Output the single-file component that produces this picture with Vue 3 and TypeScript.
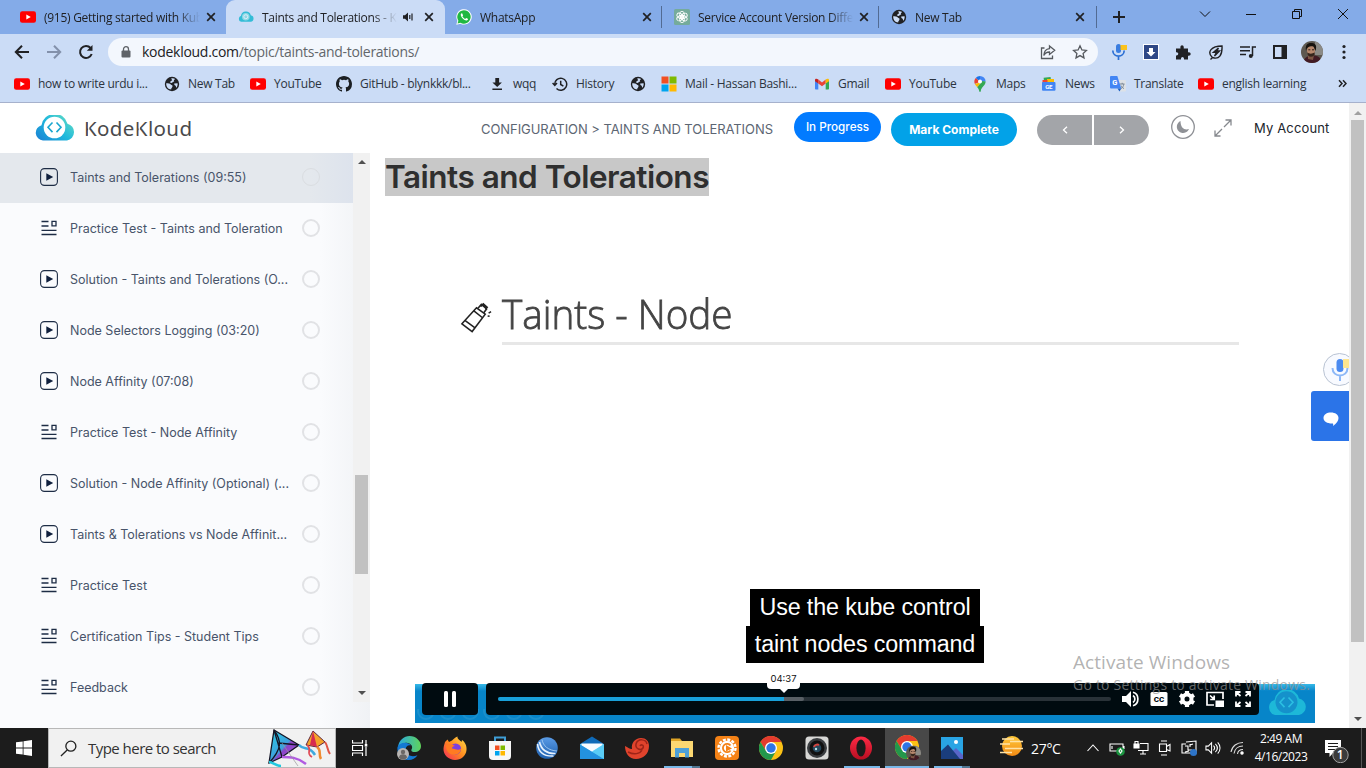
<script setup lang="ts">
interface Tab { icon: string; title: string; audio?: boolean; active?: boolean }
interface Bookmark { icon: string; label: string }
interface Lesson { kind: 'play' | 'doc'; title: string; current?: boolean }
interface App { icon: string; state?: 'open' | 'stack' | 'focus' }

const tabs: Tab[] = [
  { icon: 'yt', title: '(915) Getting started with Kubernetes' },
  { icon: 'cloud', title: 'Taints and Tolerations - KodeKloud', audio: true, active: true },
  { icon: 'whatsapp', title: 'WhatsApp' },
  { icon: 'gpt', title: 'Service Account Version Difference' },
  { icon: 'globe', title: 'New Tab' },
]

const bookmarks: Bookmark[] = [
  { icon: 'yt', label: 'how to write urdu i...' },
  { icon: 'globe', label: 'New Tab' },
  { icon: 'yt', label: 'YouTube' },
  { icon: 'github', label: 'GitHub - blynkkk/bl...' },
  { icon: 'download', label: 'wqq' },
  { icon: 'history', label: 'History' },
  { icon: 'globe', label: '' },
  { icon: 'ms', label: 'Mail - Hassan Bashi...' },
  { icon: 'gmail', label: 'Gmail' },
  { icon: 'yt', label: 'YouTube' },
  { icon: 'maps', label: 'Maps' },
  { icon: 'news', label: 'News' },
  { icon: 'translate', label: 'Translate' },
  { icon: 'yt', label: 'english learning' },
]

const lessons: Lesson[] = [
  { kind: 'play', title: 'Taints and Tolerations (09:55)', current: true },
  { kind: 'doc', title: 'Practice Test - Taints and Toleration' },
  { kind: 'play', title: 'Solution - Taints and Tolerations (O...' },
  { kind: 'play', title: 'Node Selectors Logging (03:20)' },
  { kind: 'play', title: 'Node Affinity (07:08)' },
  { kind: 'doc', title: 'Practice Test - Node Affinity' },
  { kind: 'play', title: 'Solution - Node Affinity (Optional) (...' },
  { kind: 'play', title: 'Taints & Tolerations vs Node Affinit...' },
  { kind: 'doc', title: 'Practice Test' },
  { kind: 'doc', title: 'Certification Tips - Student Tips' },
  { kind: 'doc', title: 'Feedback' },
]

const apps: App[] = [
  { icon: 'edge' }, { icon: 'firefox' }, { icon: 'store' }, { icon: 'bluedisc' }, { icon: 'mail' },
  { icon: 'shell' }, { icon: 'explorer', state: 'stack' }, { icon: 'orange' }, { icon: 'chrome' },
  { icon: 'camera' }, { icon: 'opera', state: 'open' }, { icon: 'chromeuser', state: 'focus' },
  { icon: 'photos', state: 'stack' },
]
</script>

<template>
  <div class="screen">
    <svg class="sprite" aria-hidden="true">
      <defs>
        <linearGradient id="gCloud" x1="0" y1="1" x2="1" y2="0.2"><stop offset="0" stop-color="#1a7fd4" /><stop offset=".55" stop-color="#1fb9dc" /><stop offset="1" stop-color="#63dcc4" /></linearGradient>
        <linearGradient id="gEdge" x1="0" y1="0" x2="1" y2="0"><stop offset="0" stop-color="#2aa9e0" /><stop offset="1" stop-color="#5fd35a" /></linearGradient>
        <linearGradient id="gFox" x1="1" y1="0" x2="0" y2="1"><stop offset="0" stop-color="#ffe04a" /><stop offset=".5" stop-color="#ff8a1f" /><stop offset="1" stop-color="#f4265c" /></linearGradient>
        <linearGradient id="gDisc" x1="0" y1="0" x2="0" y2="1"><stop offset="0" stop-color="#5a9be6" /><stop offset="1" stop-color="#1d5fae" /></linearGradient>
        <linearGradient id="gOpera" x1="0" y1="0" x2="0" y2="1"><stop offset="0" stop-color="#ff2a45" /><stop offset="1" stop-color="#b80f22" /></linearGradient>
        <linearGradient id="gSun" x1="0" y1="0" x2="0" y2="1"><stop offset="0" stop-color="#ffc93a" /><stop offset="1" stop-color="#f28a14" /></linearGradient>
        <linearGradient id="gKite" x1="0" y1="0" x2="1" y2="1"><stop offset="0" stop-color="#27d3e6" /><stop offset=".5" stop-color="#3f9fdc" /><stop offset=".55" stop-color="#8c45c9" /><stop offset="1" stop-color="#a455d8" /></linearGradient>
      </defs>
      <symbol id="yt" viewBox="0 0 16 16"><rect y="2.200" width="16" height="11.600" rx="2.200" fill="#f00" /><path d="M6.300 5.500v5L10.800 8z" fill="#fff" /></symbol>
      <symbol id="cloud" viewBox="0 0 40 26"><path d="M8 25.500A7.800 7.800 0 0 1 6.500 10.200a13.300 13.300 0 0 1 26-1.500A8.600 8.600 0 0 1 32 25.500z" fill="url(#gCloud)" /><circle cx="19.500" cy="12.500" r="10.800" fill="#fff" /><path d="M17.500 7.500 13 12.300l4.500 4.800M21.500 7.500l4.500 4.800-4.500 4.800" fill="none" stroke="#1aa6cf" stroke-width="1.600" /></symbol>
      <symbol id="cloudtab" viewBox="0 0 40 26"><path d="M8 25A7.800 7.800 0 0 1 7.500 10a12.500 12.500 0 0 1 24.500-1.500A8.400 8.400 0 0 1 32 25z" fill="#33bcd6" /><circle cx="19.500" cy="12.300" r="9.500" fill="#8fd9e4" /><circle cx="19.500" cy="12.300" r="5" fill="none" stroke="#eef" stroke-width="2" /></symbol>
      <symbol id="whatsapp" viewBox="0 0 16 16"><path d="M.3 15.700 1.400 11.800A7.700 7.700 0 1 1 4.400 14.700z" fill="#fff" /><path d="M1.500 14.500 2.400 11.700A6.700 6.700 0 1 1 4.500 13.700z" fill="#1fb841" /><path d="M5.600 4.300c-1.400.8-1 2.700.4 4.400s3.400 3 4.900 2.700c1-.3 1.200-1.100 1-1.600L10.100 9l-.9 1C8 9.500 6.900 8.500 6.400 7.300l.7-.9-.8-1.900z" fill="#fff" /></symbol>
      <symbol id="gpt" viewBox="0 0 16 16"><rect width="16" height="16" rx="1.500" fill="#75ab9b" /><g fill="none" stroke="#fff" stroke-width=".9"><ellipse cx="8" cy="5.700" rx="2.400" ry="3.400" /><ellipse cx="8" cy="5.700" rx="2.400" ry="3.400" transform="rotate(60 8 8)" /><ellipse cx="8" cy="5.700" rx="2.400" ry="3.400" transform="rotate(120 8 8)" /><ellipse cx="8" cy="5.700" rx="2.400" ry="3.400" transform="rotate(180 8 8)" /><ellipse cx="8" cy="5.700" rx="2.400" ry="3.400" transform="rotate(240 8 8)" /><ellipse cx="8" cy="5.700" rx="2.400" ry="3.400" transform="rotate(300 8 8)" /></g></symbol>
      <symbol id="globe" viewBox="0 0 16 16"><circle cx="8" cy="8" r="7.200" fill="#202124" /><path d="M2.200 7.300c2.100.2 3.700.1 4.600 1.200.8 1.100 1.900.4 1.700 1.900-.2 1.400-1.500 1.300-1.300 3.200C4.200 13.400 2 10.800 2.200 7.300zM7.200 2.300c1.600-.4 3 0 3.900.6L9.800 4.300l.4 1.300-1.600.3-.4 1.200-2-.3c.1-1.700.4-2 2-2.400zM10.200 7.500l3.400-.3c.3 1.800-.4 3.600-1.400 4.600-.5-1.100.1-1.700-.9-2.300-.8-.4-1.200-1.100-1.100-2z" fill="#cbdcf6" /></symbol>
      <symbol id="github" viewBox="0 0 16 16"><path fill="#1b1f23" d="M8 0C3.580 0 0 3.580 0 8c0 3.540 2.290 6.530 5.470 7.590.4.070.55-.17.55-.38 0-.19-.010-.82-.010-1.490-2.010.37-2.530-.49-2.690-.94-.09-.23-.48-.94-.82-1.130-.28-.15-.68-.52-.010-.53.63-.010 1.080.58 1.230.82.72 1.210 1.870.87 2.330.66.070-.52.28-.87.51-1.070-1.780-.2-3.640-.89-3.640-3.950 0-.87.31-1.590.82-2.150-.08-.2-.36-1.020.08-2.120 0 0 .67-.21 2.200.82a7.500 7.500 0 0 1 4 0c1.530-1.040 2.200-.82 2.200-.82.44 1.100.16 1.920.08 2.120.51.56.82 1.270.82 2.150 0 3.070-1.870 3.750-3.650 3.950.29.25.54.73.54 1.480 0 1.070-.010 1.930-.010 2.200 0 .21.15.46.55.38A8.010 8.010 0 0 0 16 8c0-4.420-3.580-8-8-8z" /></symbol>
      <symbol id="download" viewBox="0 0 16 16"><path d="M6.300 2h3.800v4.500h2.800L8.200 11 3.400 6.500h2.900zM3.400 12.400h9.600v1.600H3.400z" fill="#202124" /></symbol>
      <symbol id="history" viewBox="0 0 16 16"><path d="M2.700 8.500a6 6 0 1 1 1.800 4M.6 7l2.200 2.400L5 7M8.700 4.700v3.800l2.700 1.700" fill="none" stroke="#202124" stroke-width="1.500" /></symbol>
      <symbol id="ms" viewBox="0 0 16 16"><path d="M.5.500h7v7h-7z" fill="#f25022" /><path d="M8.500.500h7v7h-7z" fill="#7fba00" /><path d="M.5 8.500h7v7h-7z" fill="#00a4ef" /><path d="M8.500 8.500h7v7h-7z" fill="#ffb900" /></symbol>
      <symbol id="gmail" viewBox="0 0 16 16"><path d="M1 4.500 4.300 7v6.500H1.800a.8.800 0 0 1-.8-.8z" fill="#4285f4" /><path d="M15 4.500 11.700 7v6.500h2.500a.8.800 0 0 0 .8-.8z" fill="#34a853" /><path d="M4.300 3.600 8 6.400l3.700-2.800V7.500L8 10.300 4.300 7.500z" fill="#ea4335" /><path d="M1 4.300C1 2.500 2.800 2.400 4.300 3.600v3.800L1 5.200z" fill="#c5221f" /><path d="M15 4.300c0-1.800-1.800-1.900-3.300-.7v3.800L15 5.200z" fill="#fbbc04" /></symbol>
      <symbol id="maps" viewBox="0 0 16 16"><path d="M8 0a5.600 5.600 0 0 0-4.300 2L8 5.700z" fill="#1a73e8" /><path d="M8 0a5.600 5.600 0 0 1 5.600 5.500H8z" fill="#4285f4" /><path d="M3.700 2a5.600 5.600 0 0 0-.8 6L8 5.700z" fill="#ea4335" /><path d="M2.900 8c.4 1 1.400 2 2.300 3.200L10 5.700z" fill="#fbbc04" /><path d="M13.600 5.500c0 4.300-4.500 5.500-4.800 9.500-.2 1.300-1.400 1.300-1.600 0-.2-1.700-1-2.600-2-3.800L10.500 5z" fill="#34a853" /><circle cx="8" cy="5.600" r="2" fill="#fff" /></symbol>
      <symbol id="news" viewBox="0 0 16 16"><path d="M3 1.200h7v5H3z" fill="#34a853" transform="rotate(-6 8 5)" /><path d="M6 3h7v5H6z" fill="#fbbc04" /><path d="M1.500 4h5v4h-5z" fill="#ea4335" /><rect x="1" y="6" width="13.500" height="8.800" rx="1" fill="#4285f4" /><text x="7.700" y="12.800" text-anchor="middle" font-family="Roboto,sans-serif" font-size="6" font-weight="700" fill="#fff">GE</text></symbol>
      <symbol id="translate" viewBox="0 0 16 16"><path d="M7 4h8a1 1 0 0 1 1 1v9.500a1 1 0 0 1-1 1H9.500z" fill="#dde1e6" /><path d="M10 8h4.500M12.200 6.800V8M11 12.500c1.800-1 2.500-2.500 2.800-4.400M11 9.500c.5 1.400 1.700 2.500 3 3" fill="none" stroke="#7b8794" /><path d="M1 0h6.300l4 12.500H1a1 1 0 0 1-1-1V1a1 1 0 0 1 1-1z" fill="#4285f4" /><path d="m7.500 12.500 3.800 0-1.800 3z" fill="#1b5fc4" /><text x="4.600" y="9" text-anchor="middle" font-family="Roboto,sans-serif" font-size="7.500" font-weight="700" fill="#fff">G</text></symbol>
      <symbol id="avatar" viewBox="0 0 22 22"><clipPath id="cAv"><circle cx="11" cy="11" r="11" /></clipPath><g clip-path="url(#cAv)"><path d="M0 0h22v22H0z" fill="#5d5850" /><path d="M14 0h8v14h-8z" fill="#8b8a86" /><path d="M2 22c1-5 4-7 8-7.500C15 14 20 15 21 22z" fill="#421b24" /><path d="M7 14h6l-1 5-5-1z" fill="#7d5543" /><ellipse cx="10" cy="9.500" rx="4" ry="5.800" fill="#b5876c" /><path d="M5 10C4 3 7 1.500 11 2s5 3 3.500 8C13 7 13 5 11 5.300 8 5.500 6 6 5 10z" fill="#17130f" /><path d="M6.200 11.500c2 1.500 5 1.500 7.500 0-.3 3.300-1.500 4.300-3.700 4.300s-3.500-1.500-3.800-4.300z" fill="#35251c" /><path d="M7.300 8.800h2M11 8.800h2" stroke="#2c1b14" /></g></symbol>
      <symbol id="edge" viewBox="0 0 24 24"><path d="M1 11C2 4 7 0 12.500 0 19 0 24 5 24 10c0 4-3 6-6.500 6-3 0-3.800-1.500-2.700-3C16.500 9.500 12 6 8 7c-3 .5-5 2-7 4z" fill="url(#gEdge)" /><path d="M.5 11C3 6 11 5.500 14 9.500c-4-1-6 2-5 6 1 4 6 6 11.500 3.700C17 25 8 25.500 4 21 1 18 0 15 .5 11z" fill="#1379d3" /><circle cx="6" cy="18" r="6" fill="#b8b5b3" /><circle cx="6" cy="16" r="2.200" fill="#6b6866" /><path d="M2 21.500c0-4.500 8-4.500 8 0-2 3-6 3-8 0z" fill="#6b6866" /></symbol>
      <symbol id="firefox" viewBox="0 0 24 24"><path d="M2 6 4.500 3.500 6 6l3-1.500C11 3 12 1 14.500.5 14 3 17 4 18.500 6L19 4c3 2 5 6 4.500 10C23 20 18 24 12 24S0 19 .5 12.500C.7 10 1.500 8 2 6z" fill="url(#gFox)" /><circle cx="12.500" cy="13" r="5.600" fill="#7b3fe0" /><path d="M3 9c3-2 6-1 9 1-2 0-3 1-3 2.500 4 0 5 3 9 0 0 4-4 7-8 6C5 18 3 14 3 9z" fill="#ff7b22" /></symbol>
      <symbol id="store" viewBox="0 0 24 24"><path d="M7 6V1.500h10V6" fill="none" stroke="#3f9ed6" stroke-width="2" /><path d="M1 5h22v15a4 4 0 0 1-4 4H5a4 4 0 0 1-4-4z" fill="#f7f7f7" /><path d="M7 9.500h4.500V14H7z" fill="#f25022" /><path d="M12.500 9.500H17V14h-4.500z" fill="#7fba00" /><path d="M7 15h4.500v4.500H7z" fill="#00a4ef" /><path d="M12.500 15H17v4.500h-4.500z" fill="#ffb900" /></symbol>
      <symbol id="bluedisc" viewBox="0 0 24 24"><circle cx="12" cy="12" r="10.800" fill="url(#gDisc)" /><path d="M2.500 8c1 8 6.500 12.500 16 12M4.500 6C6 13.500 12 18 20.500 17.500" fill="none" stroke="#e8f2fd" stroke-width="1.600" /><path d="M7 3.500C8 10 13.500 14.500 22 15" fill="none" stroke="#9cc5ef" stroke-width="1" /></symbol>
      <symbol id="mail" viewBox="0 0 24 24"><path d="M0 8 12 .5 24 8z" fill="#0f6ab8" /><path d="M0 8h24v15H0z" fill="#50c3ef" /><path d="M1.500 7.500h21v2L12 16 1.500 9.500z" fill="#f7fbff" /><path d="M0 8.500 24 23H0z" fill="#2392df" /><path d="M12 15.500 24 8v15z" fill="#5accf5" /></symbol>
      <symbol id="shell" viewBox="0 0 24 24"><path d="M0 10c3 1 4 3 7 3-1-6 3-11 9-11 5 0 8 3 8 8 0 8-6 13-13 13C4 23 0 17 0 10z" fill="#e0432c" /><path d="M22 8c-1-5-9-6-11 0-1 5 5 7 7 4 1.500-3-2-4-3-2M3 16c6 3 12 2 14-2" fill="none" stroke="#9d2418" stroke-width="1.500" /></symbol>
      <symbol id="explorer" viewBox="0 0 24 24"><path d="M1 2.500h9l2 2.500h-11z" fill="#e0a526" /><path d="M1 5h22v16H1z" fill="#fcd872" /><path d="M5 12h14v9.500h-4V17H9v4.500H5z" fill="#4da0d8" /></symbol>
      <symbol id="orange" viewBox="0 0 24 24"><rect width="24" height="24" rx="4" fill="#f58216" /><circle cx="12" cy="12" r="8.500" fill="none" stroke="#fff" stroke-width="2.400" stroke-dasharray="3 1.450" /><circle cx="12" cy="12" r="7.200" fill="#fff" /><path d="M15.500 9.500a4.200 4.200 0 1 0 0 5" fill="none" stroke="#f58216" stroke-width="1.800" /><path d="m11 9 6 3.500-6 3z" fill="#f58216" /></symbol>
      <symbol id="chrome" viewBox="0 0 24 24"><circle cx="12" cy="12" r="12" fill="#fbc116" /><path d="M12 6h10.400A12 12 0 0 0 1.600 6L7 15z" fill="#e33b2e" /><path d="M1.600 6A12 12 0 0 0 12 24l5-9H7z" fill="#23974b" /><circle cx="12" cy="12" r="6" fill="#fff" /><circle cx="12" cy="12" r="4.700" fill="#2f75e6" /></symbol>
      <symbol id="camera" viewBox="0 0 24 24"><rect x=".5" y=".5" width="23" height="23" rx="3.500" fill="#d8d8d6" /><circle cx="12" cy="12" r="10" fill="#3a3d40" /><circle cx="12" cy="12" r="7.500" fill="#111" /><circle cx="12" cy="12" r="4.300" fill="#26485c" /><path d="M9 11a3.500 3.500 0 0 1 5-2" fill="none" stroke="#d3443e" stroke-width="2" /><circle cx="11" cy="13" r="1.200" fill="#b8e3ea" /></symbol>
      <symbol id="opera" viewBox="0 0 24 24"><ellipse cx="12" cy="12" rx="11" ry="11.500" fill="url(#gOpera)" /><ellipse cx="12" cy="12" rx="4.600" ry="8.600" fill="#1c1c1c" /></symbol>
      <symbol id="chromeuser" viewBox="0 0 26 26"><use href="#chrome" width="24" height="24" /><use href="#avatar" x="11" y="10.500" width="15" height="15" /></symbol>
      <symbol id="photos" viewBox="0 0 24 24"><path d="M1 1h22v22H1z" fill="#29a4e4" /><path d="M12 15.500 16 12l7 7v4H12z" fill="#5965c9" /><path d="M1 15 8 8.500 20 23H1z" fill="#1a3d7c" /><circle cx="16" cy="6" r="2" fill="#fff" /></symbol>
    </svg>

    <header class="tabstrip">
      <div v-for="(t, n) in tabs" :key="n" class="tab" :class="{ active: t.active }">
        <svg class="ico"><use :href="t.icon === 'cloud' ? '#cloudtab' : '#' + t.icon" /></svg>
        <span class="tabtitle">{{ t.title }}</span>
        <svg v-if="t.audio" class="audio" viewBox="0 0 12 12"><path d="M1 4.300h2L6 1.500v9L3 7.700H1z" fill="#202124" /><path d="M7.800 4v4M10 2.500v7" stroke="#202124" stroke-width="1.200" /></svg>
        <svg class="close" viewBox="0 0 10 10"><path d="m1.200 1.200 7.600 7.600m0-7.600L1.200 8.800" stroke="#202124" stroke-width="1.700" /></svg>
      </div>
      <svg class="plus" viewBox="0 0 12 12"><path d="M6 0v12M0 6h12" stroke="#202124" stroke-width="2" /></svg>
      <div class="winctl">
        <svg viewBox="0 0 12 12"><path d="m1 3.500 5 5 5-5" /></svg>
        <svg viewBox="0 0 12 12"><path d="M1 6.500h10" /></svg>
        <svg viewBox="0 0 12 12"><path d="M1.500 3.500h7v7h-7zM3.500 3.500v-2h7v7h-2" /></svg>
        <svg viewBox="0 0 12 12"><path d="m1 1 10 10M11 1 1 11" /></svg>
      </div>
    </header>

    <div class="toolbar">
      <svg class="nav" viewBox="0 0 16 16"><path d="M15 8H2M8 1.800 1.800 8 8 14.200" /></svg>
      <svg class="nav dim" viewBox="0 0 16 16"><path d="M1 8h13M8 1.800 14.200 8 8 14.200" /></svg>
      <svg class="nav" viewBox="0 0 16 16"><path d="M13.700 10A6 6 0 1 1 12.600 4" /><path d="M14.500 1v5.700H8.800z" fill="#202124" stroke="none" /></svg>
      <div class="omnibox">
        <svg class="lock" viewBox="0 0 10 12"><rect x=".5" y="4.500" width="9" height="7" rx="1" fill="#5f6368" /><path d="M2.500 5V3.200a2.500 2.500 0 0 1 5 0V5" fill="none" stroke="#5f6368" stroke-width="1.300" /></svg>
        <span class="url">kodekloud.com<i>/topic/taints-and-tolerations/</i></span>
        <svg class="share" viewBox="0 0 16 16"><path d="M4.500 4H1.500v10.500h11v-3M9.500 2l5.200 4.300-5.200 4.200V8C7 8 5 9 3.800 11.500 4 7.500 6 5 9.500 4.600z" /></svg>
        <svg class="share" viewBox="0 0 16 16"><path d="m8 1.800 1.900 4.100 4.500.5-3.300 3 .9 4.500L8 11.600l-4 2.300.9-4.500-3.300-3 4.500-.5z" /></svg>
      </div>
      <div class="ext">
        <svg viewBox="0 0 16 16"><rect x="5" y="0" width="5" height="9" rx="2.500" fill="#3a7de0" /><path d="M1.800 6.500c0 7.500 11.400 7.500 11.400 0M7.500 12v4" fill="none" stroke="#2b6fd4" stroke-width="1.700" /><path d="M9.500 1H16v5H9.500z" fill="#fbc21b" /></svg>
        <svg viewBox="0 0 16 16"><path d="M0 0h16v16H0z" fill="#fff" /><path d="M1 1h14v14H1z" fill="#2f4886" /><path d="M6 4h4v4h2.500L8 12.500 3.500 8H6z" fill="#fff" /></svg>
        <svg viewBox="0 0 16 16"><path d="M1 4.500h4.500c-1-4.500 4-4.500 3.200 0H13v4c3.500-1 3.500 4 0 3.200V15.500H9c.5-3.500-3.500-3.500-3 0H1v-4c3 .5 3-3.800 0-3.200z" fill="#202124" /></svg>
        <svg viewBox="0 0 16 16"><path d="M4 13C-1 8 3 2 14 2c.5 9-3 14-9.500 11.500L2.500 15.500M10.500 4 5.500 8.300h3L6.500 12l5-5h-3z" fill="none" stroke="#202124" stroke-width="1.400" /></svg>
        <svg viewBox="0 0 16 16"><path d="M0 3h10M0 6.700h10M0 10.500h6M12.500 12V3H16" fill="none" stroke="#202124" stroke-width="1.500" /><circle cx="10.800" cy="12" r="2" fill="#202124" /></svg>
        <svg viewBox="0 0 16 16"><path d="M2 2h12v12H2z" fill="none" stroke="#202124" stroke-width="2" /><path d="M9.500 2H14v12H9.500z" fill="#202124" /></svg>
        <svg class="face"><use href="#avatar" /></svg>
        <svg viewBox="0 0 16 16"><g fill="#202124"><circle cx="8" cy="2.500" r="1.600" /><circle cx="8" cy="8" r="1.600" /><circle cx="8" cy="13.500" r="1.600" /></g></svg>
      </div>
    </div>

    <nav class="bookmarks">
      <div v-for="(b, n) in bookmarks" :key="n" class="bm"><svg class="ico"><use :href="'#' + b.icon" /></svg><span>{{ b.label }}</span></div>
      <svg class="more" viewBox="0 0 9 9"><path d="m1 1.300 3 3.200L1 7.700M5 1.300l3 3.200-3 3.200" fill="none" stroke="#202124" stroke-width="1.500" /></svg>
    </nav>

    <main class="page">
      <div class="site">
        <header class="sitehead">
          <svg class="logo"><use href="#cloud" /></svg>
          <svg class="word" viewBox="0 0 108 20"><text x="-1" y="16.800" textLength="108" lengthAdjust="spacing">KodeKloud</text><path d="M3.700 1v17M54.300 1v17" stroke="#fff" stroke-width="1.200" /></svg>
          <span class="crumb">CONFIGURATION &gt; TAINTS AND TOLERATIONS</span>
          <span class="progress">In Progress</span>
          <button class="complete">Mark Complete</button>
          <div class="pager"><span><svg viewBox="0 0 6 8"><path d="M5 .7 1.500 4 5 7.300" /></svg></span><span><svg viewBox="0 0 6 8"><path d="M1 .7 4.500 4 1 7.300" /></svg></span></div>
          <svg class="moon" viewBox="0 0 24 24"><circle cx="12" cy="12" r="11.300" fill="none" stroke="#8f9196" stroke-width="1.300" /><path d="M9.500 6a6.300 6.300 0 1 0 8.500 8c-4 1.500-8.500-.5-8.500-8z" fill="#8f9196" /></svg>
          <svg class="expand" viewBox="0 0 18 18"><path d="M11.500 1H17v5.500M17 1l-7 7M6.500 17H1v-5.500M1 17l7-7" /></svg>
          <span class="account">My Account</span>
        </header>
        <div class="cols">
          <aside class="side">
            <ul class="lessons">
              <li v-for="l in lessons" :key="l.title" :class="{ current: l.current }">
                <svg v-if="l.kind === 'play'" class="kind" viewBox="0 0 18 18"><rect x=".6" y=".6" width="16.800" height="16.800" rx="3.800" fill="none" stroke="#1d2c45" stroke-width="1.100" /><path d="m6.300 5.200 6.900 3.800-6.900 3.800z" fill="#0f1f3d" /></svg>
                <svg v-else class="kind" viewBox="0 0 18 18"><path d="M1.500 2.500h7M1.500 7h7M1.500 11.300h15M1.500 15.500h15M12 2.300h4v4.500h-4z" fill="none" stroke="#1d2c45" stroke-width="1.300" /></svg>
                <span>{{ l.title }}</span><b></b>
              </li>
            </ul>
            <div class="bar sidebar"><svg viewBox="0 0 8 5"><path d="m0 5 4-4 4 4z" /></svg><div></div><svg viewBox="0 0 8 5"><path d="m0 0 4 4 4-4z" /></svg></div>
          </aside>
          <section class="content">
            <h1><span>Taints and Tolerations</span></h1>
            <div class="video">
              <div class="slide">
                <svg class="spray" viewBox="0 0 34 32"><g fill="none" stroke="#222" stroke-width="1.600"><path d="M2 22 17 5.500l9 6.500L12.500 30zM5 18.500l10.500 7.800M14 8.500l9.500 7.500" /><path d="M18.500 6 22 2l5.500 4.500-3 4M21.500 4 24 1.500 28 5l-2 2" /><path d="m29.500 11 2.500-1.500M28.500 14l2 .3" /></g></svg>
                <h2><span>Taints - Node</span></h2>
              </div>
              <div class="caption"><span>Use the kube control</span><span>taint nodes command</span></div>
              <div class="band">
                <svg class="rings" viewBox="0 0 130 14"><g fill="none" stroke="#3aa0d2" stroke-width="2" opacity=".4"><circle v-for="c in 6" :key="c" :cx="c * 22 - 11" cy="2" r="8" /></g></svg>
                <div class="pause"><svg viewBox="0 0 12 16"><rect width="4" height="16" rx="1.500" fill="#fff" /><rect x="8" width="4" height="16" rx="1.500" fill="#fff" /></svg></div>
                <div class="controls">
                  <div class="track"><i class="played"></i><i class="buffered"></i><span class="time">04:37</span></div>
                  <svg viewBox="0 0 18 16"><path d="M0 5h4l5-5v16l-5-5H0z" fill="#fff" /><path d="M11 4.500c2.500 1.500 2.500 5.500 0 7M11 1.300c6.500 1.700 6.500 11.700 0 13.400" fill="none" stroke="#fff" stroke-width="1.700" /></svg>
                  <svg viewBox="0 0 18 16"><rect x=".5" y="1" width="17" height="14" rx="1.500" fill="#fff" /><text x="9" y="11" text-anchor="middle" font-family="Roboto,sans-serif" font-weight="900" font-size="8" fill="#000b10">CC</text></svg>
                  <svg viewBox="0 0 18 16"><circle cx="9" cy="8" r="4.500" fill="none" stroke="#fff" stroke-width="4" /><path d="M9 0v3M9 13v3M2 4l2.700 1.500M13.300 10.500 16 12M2 12l2.700-1.500M13.300 5.500 16 4" stroke="#fff" stroke-width="4.200" /></svg>
                  <svg viewBox="0 0 18 16"><path d="M8 14H1V1.500h16V8M4 4.500l4 3.700M8.200 4.500v4h-4" fill="none" stroke="#fff" stroke-width="1.700" /><path d="M9.500 9.500H18V16H9.500z" fill="#fff" /></svg>
                  <svg viewBox="0 0 18 16"><path d="M2 5.500V1h4.500M2 1l4.500 4M11.500 1H16v4.500M16 1l-4.500 4M2 10.500V15h4.500M2 15l4.500-4M16 10.500V15h-4.500M16 15l-4.500-4" fill="none" stroke="#fff" stroke-width="1.800" /></svg>
                </div>
                <svg class="watermark" viewBox="0 0 40 26"><path d="M8 25A7.800 7.800 0 0 1 7.500 10a12.500 12.500 0 0 1 24.500-1.500A8.400 8.400 0 0 1 32 25z" fill="#1db8d8" /><circle cx="19.500" cy="12.300" r="11" fill="#1591cb" /><path d="M17.500 7.500 13 12.300l4.500 4.800M21.500 7.500l4.500 4.800-4.500 4.800" fill="none" stroke="#2bbfe2" stroke-width="1.600" /></svg>
              </div>
            </div>
          </section>
        </div>
        <div class="voice"><svg viewBox="0 0 18 24"><rect x="5.500" y="1" width="7" height="13" rx="3.500" fill="#4a8af0" /><path d="M1.500 10c0 10 15 10 15 0M9 17.500V23" fill="none" stroke="#8db8f7" stroke-width="2" /><path d="M12 1h6v9h-6z" fill="#fde58f" /></svg></div>
        <div class="chat"><svg viewBox="0 0 16 16"><path d="M8 1.500c4.200 0 7.500 2.200 7.500 5.500 0 2.500-1.700 5.500-5.500 8 .3-1 .3-1.700 0-2.500C4.500 12.800.5 10.500.5 7S3.800 1.500 8 1.500z" fill="#fff" /></svg></div>
      </div>
      <div class="bar pagebar"><svg viewBox="0 0 8 5"><path d="m0 5 4-4 4 4z" fill="#a0a0a0" /></svg><div></div><svg viewBox="0 0 8 5"><path d="m0 0 4 4 4-4z" /></svg></div>
    </main>

    <div class="activate"><p>Activate Windows</p><small>Go to Settings to activate Windows.</small></div>

    <footer class="taskbar">
      <div class="start"><svg viewBox="0 0 16 16"><path d="M0 2.300 6.700 1.400v6.200H0zM7.500 1.200 16 0v7.600H7.500zM0 8.400h6.700v6.200L0 13.700zM7.500 8.400H16V16l-8.500-1.200z" fill="#fff" /></svg></div>
      <div class="search">
        <svg class="lens" viewBox="0 0 18 18"><circle cx="11.500" cy="6.500" r="5.300" /><path d="M7.600 10.500 1 17" /></svg>
        <span>Type here to search</span>
        <svg class="kite" viewBox="0 0 66 38"><path d="M6 1 31 16 14 28 1 34z" fill="url(#gKite)" stroke="#151525" stroke-width="1.300" /><path d="M6 1 14 28M6 1C14 12 14 20 1 34M10 14 31 16" fill="none" stroke="#151525" stroke-width="1.300" /><path d="M31 16c5 6 10 0 16 10" fill="none" stroke="#3fa9df" stroke-width="2.500" /><path d="M14 28c8 0 15 0 24 7" fill="none" stroke="#b15be2" stroke-width="2.500" /><path d="M1 33c4 0 7 4 12 4" fill="none" stroke="#20c8df" stroke-width="2.500" /><path d="M45 2 57 13 49 18 38 16z" fill="#f4a32a" stroke="#5d2540" /><path d="M45 2 49 18 42 16z" fill="#d72b50" /><path d="M57 13c3 4 2 8 5 12" fill="none" stroke="#e05545" stroke-width="2" /><path d="M49 18c5 3 1 7 4 12" fill="none" stroke="#ef8a30" stroke-width="2.500" /><path d="M39 16c6 5-2 8 5 12" fill="none" stroke="#e04a55" stroke-width="1.800" /><path d="M14 14 30 37" stroke="#999" stroke-width=".7" /></svg>
      </div>
      <div class="view"><svg viewBox="0 0 16 16"><path d="M.5 0v3h10V0M.5 16v-3h10v3M.5 5.500h10v5H.500zM14 0v4M14 7v9" fill="none" stroke="#fff" stroke-width="1.200" /><path d="M12.700 4h2.600v2.600h-2.600z" fill="#fff" /></svg></div>
      <div class="apps"><div v-for="a in apps" :key="a.icon" :class="a.state"><svg><use :href="'#' + a.icon" /></svg></div></div>
      <div class="weather"><svg viewBox="0 0 24 22"><circle cx="13" cy="11" r="10" fill="url(#gSun)" /><path d="M3 4h12M1 9h10M6 13.500h18M1 17.500h12M11 6.500h13" stroke="#ffe3a6" stroke-width="1.500" /></svg><span>27°C</span></div>
      <div class="tray">
        <svg viewBox="0 0 16 16"><path d="m2.500 11 5.500-6 5.500 6" /></svg>
        <svg viewBox="0 0 16 16"><path d="M1 4h13v7H1zM15 6v3M3 6v3" /><circle cx="11.500" cy="11.500" r="4.300" fill="#1b9440" stroke="none" /><path d="m11.500 9 1.500 2-1.500 2-1.500-2z" /></svg>
        <svg viewBox="0 0 16 16"><path d="M7 3.500h8v7H5M10 11v3M7 14h6" /><path d="M1 4h5v4H1z" fill="#fff" /><path d="M2 4V1.500h3V4" /></svg>
        <svg viewBox="0 0 16 16"><path d="M4 1h6M4 15h6M2.500 4h7v7.500h-7zM9.500 6.500 13 4.500v6.500L9.500 9.500" /></svg>
        <svg viewBox="0 0 16 16"><path d="M5 2 15 1v12H1V4h4M4 6h3v4h4M4 12l4-1M9 5l3-1M9 4v3" /><circle cx="12.500" cy="12.500" r="3.500" fill="#2d74c8" stroke="none" /></svg>
        <svg viewBox="0 0 17 16"><path d="M1 6h2.500L7 2.500v11L3.500 10H1zM9 5.500c1.500 1.500 1.500 3.500 0 5M11 3.500c2.700 2.700 2.700 6.300 0 9M13.500 2c3.300 3.500 3.300 8.500 0 12" /></svg>
        <svg viewBox="0 0 16 16"><path d="M2 12C3 6 8 2.500 14 2.500M5 13.500c.5-4.500 4-7.500 9-7.500M8.500 14c.3-2.500 2.500-4.500 5.500-4.500" opacity=".85" /><circle cx="13" cy="13" r="1.200" fill="#fff" /></svg>
      </div>
      <div class="clock"><span>2:49 AM</span><span>4/16/2023</span></div>
      <div class="note"><svg viewBox="0 0 26 24"><path d="M1 1h16v13H9l-3.500 4v-4H1z" fill="#fff" /><path d="M4 4.500h10M4 7.500h10M4 10.500h7" stroke="#1c1c1c" stroke-width="1.200" /><circle cx="16.500" cy="16" r="7.700" fill="#3b3b3b" stroke="#a0a0a0" /><text x="16.300" y="20.300" text-anchor="middle" font-family="Open Sans,sans-serif" font-size="12" font-weight="600" fill="#fff">1</text></svg></div>
    </footer>
  </div>
</template>

<style>
body { margin: 0; overflow: hidden; }
</style>

<style scoped>
* { box-sizing: border-box; }
svg { display: block; flex: none; }
.screen { position: relative; width: 1366px; height: 768px; overflow: hidden; display: flex; flex-direction: column; font-family: "Open Sans", "Noto Sans", sans-serif; background: #fff; }
.sprite { position: absolute; width: 0; height: 0; }
.ico { width: 16px; height: 16px; }

.tabstrip { height: 34px; background: #84abe8; display: flex; align-items: stretch; padding-left: 9px; }
.tab { flex: none; width: 217px; padding: 0 10px 0 11px; display: flex; align-items: center; font-size: 12px; letter-spacing: -.27px; color: #202124; }
.tab + .tab { padding-left: 12px; }
.tab.active { width: 219px; padding-right: 11px; background: #cbdcf6; border-radius: 9px 9px 0 0; }
.tab.active + .tab { width: 217px; padding: 0 9px 0 11px; }
.tab:nth-child(3), .tab:nth-child(4), .tab:nth-child(5) { border-right: 1px solid; border-image: linear-gradient(transparent 20%, #526b93 20% 80%, transparent 80%) 1; }
.tab:nth-child(4) { padding-right: 9px; }
.tab:nth-child(5) { width: 218px; padding-right: 11px; }
.tabtitle { flex: 1; margin: 0 6px 0 8px; white-space: nowrap; overflow: hidden; mask-image: linear-gradient(90deg, #000 calc(100% - 24px), transparent); }
.active .tabtitle { margin-right: 5px; }
.audio { width: 12px; height: 12px; margin-right: 10px; }
.close { width: 10px; height: 10px; }
.plus { width: 12px; height: 12px; margin: 11px 0 0 16px; }
.winctl { display: flex; margin: 8px 0 0 74px; gap: 34px; }
.winctl svg { width: 12px; height: 12px; fill: none; stroke: #111; stroke-width: 1; }

.toolbar { height: 35px; background: #cbdcf6; display: flex; align-items: center; padding-left: 14px; }
.nav { width: 16px; height: 16px; fill: none; stroke: #202124; stroke-width: 2; margin-right: 16px; }
.nav.dim { stroke: #8391ab; }
.nav:nth-child(3) { margin-right: 14px; }
.omnibox { width: 990px; height: 28px; border-radius: 14px; background: #f3f7fd; display: flex; align-items: center; padding: 0 10px 0 13px; }
.lock { width: 10px; height: 12px; margin-right: 11px; }
.url { flex: 1; font-size: 14px; color: #202124; letter-spacing: -.28px; }
.url i { font-style: normal; color: #62666b; }
.share { width: 16px; height: 16px; margin-left: 16px; fill: none; stroke: #55595e; stroke-width: 1.300; }
.ext { display: flex; align-items: center; gap: 16.200px; padding-left: 13px; }
.ext svg { width: 16px; height: 16px; }
.ext .face { width: 22px; height: 22px; margin: 0 -3px; }

.bookmarks { height: 34px; background: #cbdcf6; border-bottom: 1px solid #a6b1cc; display: grid; align-items: center; padding: 0 0 4px 14px; grid-template-columns: 150px 86px 86px 153px 63px 78px 31px 153px 71px 87px 69px 69px 88px 140px 12px; }
.bm { display: flex; align-items: center; gap: 8px; font-size: 12px; color: #2c3440; white-space: nowrap; letter-spacing: -.27px; }
.more { width: 9px; height: 9px; }

.page { height: 625px; display: flex; }
.site { position: relative; width: 1349px; height: 625px; display: flex; flex-direction: column; font-family: Inter, sans-serif; }
.sitehead { height: 50px; display: flex; align-items: flex-start; padding-left: 35px; background: #fff; }
.logo { width: 40px; height: 26px; margin-top: 12px; }
.word { width: 108px; height: 20px; margin: 16px 0 0 10px; overflow: visible; }
.word text { font-family: "Noto Sans", sans-serif; font-size: 20.500px; fill: #4a4a4c; }
.crumb { width: 293px; margin: 18px 1px 0 288px; font-size: 13px; line-height: 17px; color: #5c6673; white-space: nowrap; letter-spacing: -.07px; }
.progress { width: 87px; height: 30px; margin: 9px 0 0 19px; border-radius: 15px; background: #027bff; color: #fff; font-size: 11.700px; font-weight: 500; line-height: 30px; text-align: center; }
.complete { width: 126px; height: 33px; margin: 10px 0 0 10px; padding: 0; border: 0; border-radius: 17px; background: #02a2e8; color: #fff; font: 700 12px/32px Inter, sans-serif; }
.pager { display: flex; gap: 2px; margin: 12px 0 0 20px; }
.pager span { width: 55px; height: 30px; background: #a3a5a9; display: flex; align-items: center; justify-content: center; border-radius: 15px 0 0 15px; }
.pager span + span { border-radius: 0 15px 15px 0; }
.pager svg { width: 6px; height: 8px; fill: none; stroke: #fff; stroke-width: 1.300; }
.moon { width: 24px; height: 24px; margin: 12px 0 0 22px; }
.expand { width: 18px; height: 18px; margin: 16px 0 0 19px; fill: none; stroke: #86898e; stroke-width: 1.300; }
.account { margin: 16px 0 0 22px; font-size: 13px; line-height: 18px; letter-spacing: .15px; color: #20242c; white-space: nowrap; }

.cols { height: 575px; display: flex; }
.side { width: 370px; height: 575px; display: flex; background: linear-gradient(90deg, #fafbfd 320px, #f0f2f5); }
.lessons { width: 353px; height: 575px; overflow: hidden; margin: 0; padding: 0; list-style: none; }
.lessons li { height: 51px; display: flex; align-items: center; padding: 0 33px 2px 40px; font-size: 12.500px; letter-spacing: 0; color: #48546a; white-space: nowrap; }
.lessons li:first-child { height: 50px; }
.lessons li.current { background: linear-gradient(90deg, #e4e8ed 310px, #dde3ed); }
.lessons li span { flex: 1; margin-left: 12px; padding-top: 2px; }
.lessons li.current span { padding-top: 0; }
.lessons li b { width: 18px; height: 18px; border: 2px solid #e1e2e5; border-radius: 50%; }
.lessons li.current b { border-color: #dadde1; border-width: 1px; }
.kind { width: 18px; height: 18px; }
.bar { width: 17px; background: #f1f1f1; display: flex; flex-direction: column; align-items: center; }
.bar svg { width: 8px; height: 5px; fill: #505050; }
.bar div { width: 13px; background: #c1c1c1; }
.sidebar { height: 549px; padding-top: 6px; }
.sidebar div { height: 99px; margin: 311px 0 117px; }
.pagebar { height: 625px; padding-top: 7px; }
.pagebar div { height: 522px; margin: 5px 0 75px; }

.content { width: 979px; padding: 5px 0 0 15px; }
h1 { margin: 0; height: 38px; font-size: 31.500px; line-height: 38px; font-weight: 600; letter-spacing: -.5px; color: #2f2f2f; white-space: nowrap; }
h1 span { display: inline-block; width: 324px; background: #c8c8c8; }
.video { margin-left: 30px; width: 900px; height: 527px; display: flex; flex-direction: column; align-items: center; }
.slide { width: 900px; height: 393px; display: flex; align-items: flex-start; padding: 89px 0 0 45px; }
.spray { width: 33px; height: 32px; margin-top: 17px; }
h2 { margin: 0 0 0 9px; width: 737px; height: 60px; border-bottom: 3px solid #e7e7e7; font: 300 41px/57px "Open Sans", sans-serif; color: #444; white-space: nowrap; }
h2 span { display: inline-block; transform: scaleX(.943); transform-origin: left; -webkit-text-stroke: .8px #444; }
.caption { height: 95px; display: flex; flex-direction: column; align-items: center; font: 23.300px/36px "Liberation Sans", Arial, sans-serif; color: #fff; white-space: nowrap; }
.caption span { background: #000; height: 37px; padding: 0 9px; letter-spacing: -.13px; }
.band { position: relative; width: 900px; height: 39px; background: linear-gradient(#37b9e8, #0785c9 7px); display: flex; align-items: flex-start; padding-left: 7px; }
.rings { position: absolute; left: 0; bottom: 0; width: 130px; height: 14px; }
.pause { position: relative; width: 56px; height: 32px; margin-top: -1px; background: #000b10; border-radius: 4px; display: flex; align-items: center; justify-content: center; }
.pause svg { width: 12px; height: 16px; }
.controls { position: relative; width: 773px; height: 32px; margin: -1px 0 0 8px; background: #000b10; border-radius: 4px; display: flex; align-items: center; gap: 10px; padding-left: 12px; }
.controls > svg { width: 18px; height: 16px; }
.track { position: relative; width: 613px; height: 4px; margin-right: 1px; border-radius: 2px; background: #293238; display: flex; }
.played { width: 286px; background: #18a0d9; border-radius: 2px 0 0 2px; }
.buffered { width: 20px; background: #596066; border-radius: 0 2px 2px 0; }
.time { position: absolute; left: 269px; top: -29px; width: 33px; height: 21px; border-radius: 4px; background: #fff; font-size: 9.500px; line-height: 21px; text-align: center; color: #111; }
.time::after { content: ""; position: absolute; left: 13px; top: 21px; border: 4px solid transparent; border-bottom: 0; border-top-color: #fff; }
.watermark { width: 40px; height: 26px; margin: 6px 0 0 8px; }
.voice { position: absolute; left: 1323px; top: 250px; width: 33px; height: 33px; border: 1px solid #b8c2d2; border-radius: 50%; background: #f8faff; display: flex; align-items: center; clip-path: inset(0 7px 0 0); padding-left: 7px; }
.voice svg { width: 18px; height: 24px; }
.chat { position: absolute; right: 0; top: 288px; width: 38px; height: 50px; border-radius: 3px 0 0 3px; background: #2b74e8; display: flex; align-items: center; justify-content: center; }
.chat svg { width: 16px; height: 16px; margin: 5px 0 0 2px; }

.activate { position: absolute; left: 1073px; top: 650px; color: rgba(145, 145, 145, .7); white-space: nowrap; }
.activate p { margin: 0; font-size: 19px; line-height: 24px; letter-spacing: .07px; }
.activate small { display: block; font-size: 14px; line-height: 21px; letter-spacing: .22px; }

.taskbar { height: 40px; background: #1c1c1c; display: flex; color: #fff; }
.start { width: 48px; display: flex; align-items: center; justify-content: center; }
.start svg { width: 16px; height: 16px; }
.search { width: 288px; background: #f1f1f1; border: 1px solid #b8b8b8; display: flex; align-items: center; padding-left: 11px; font-size: 15px; color: #333; letter-spacing: -.53px; white-space: nowrap; }
.lens { width: 17px; height: 17px; fill: none; stroke: #222; stroke-width: 1.400; margin-right: 11px; }
.search span { width: 180px; }
.kite { width: 66px; height: 38px; }
.view { width: 51px; display: flex; align-items: center; padding-left: 16px; }
.view svg { width: 16px; height: 16px; }
.apps { display: grid; grid-template-columns: 46px 45px 47px 45px 45px 45px 45px 44px 46px 44px 46px 45px 44px; }
.apps div { width: 44px; height: 40px; display: flex; align-items: center; justify-content: center; }
.apps svg { width: 24px; height: 24px; }
.apps .focus svg { width: 26px; height: 26px; margin-left: 2px; }
.apps .open { background: linear-gradient(#79b8e8, #79b8e8) 5px 100% / 36px 2px no-repeat; }
.apps .stack { background: linear-gradient(90deg, #79b8e8 28px, #507590 28px) 4px 100% / 36px 2px no-repeat; }
.apps .focus { background: linear-gradient(#79b8e8, #79b8e8) 0 100% / 44px 2px no-repeat #484848; }
.weather { display: flex; align-items: center; width: 111px; padding-left: 25px; font-size: 14px; letter-spacing: -.3px; }
.weather svg { width: 24px; height: 22px; margin: -4px 8px 0 0; }
.tray { display: flex; align-items: center; gap: 8px; width: 166px; }
.tray svg { width: 16px; height: 16px; fill: none; stroke: #fff; stroke-width: 1.100; }
.clock { width: 60px; display: flex; flex-direction: column; align-items: center; padding-top: 2px; font-size: 12px; line-height: 18px; letter-spacing: -.47px; white-space: nowrap; }
.note { margin-left: 13px; padding-top: 11px; }
.note svg { width: 26px; height: 24px; }
.taskbar::after { content: ""; width: 1px; margin-left: auto; margin-right: 4px; background: #555; }
</style>
